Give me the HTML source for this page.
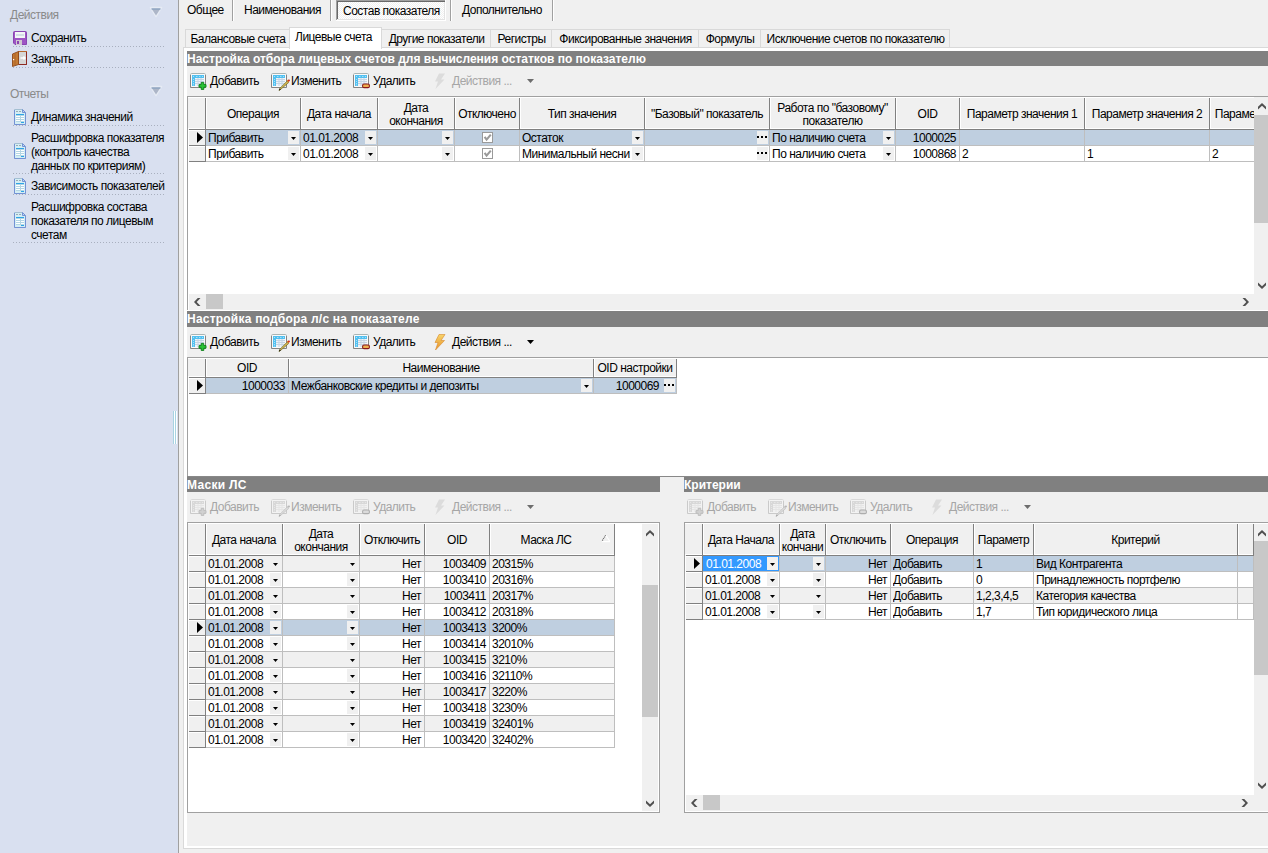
<!DOCTYPE html>
<html><head><meta charset="utf-8"><style>
html,body{margin:0;padding:0;}
body{width:1268px;height:853px;overflow:hidden;position:relative;background:#f0f0f0;font-family:'Liberation Sans', sans-serif;font-size:12px;letter-spacing:-0.5px;color:#000;}
body div, body svg{position:absolute;}
.t{white-space:nowrap;line-height:12px;}
</style></head><body>
<div style="left:0px;top:0px;width:178px;height:853px;background:#d9e0f0"></div><div style="left:178px;top:0px;width:1px;height:853px;background:#a0a0a0"></div><div class="t" style="left:10px;top:9px;color:#8a8a8a">Действия</div><svg style="left:149px;top:6px" width="14" height="12" viewBox="0 0 14 12"><path d="M1.5 1.5 L12.5 1.5 L7 10.5 Z" fill="#e6ebf4" stroke="#e6ebf4" stroke-width="1.5" stroke-linejoin="round"/><path d="M2.5 2.5 L11.5 2.5 L7 9.5 Z" fill="#adb6c8"/><path d="M2.5 3 H11.5" stroke="#7f9bbd" stroke-width="1"/></svg><svg style="left:13px;top:31px" width="14" height="14" viewBox="0 0 14 14">
<path d="M0.5 1.5 Q0.5 0.5 1.5 0.5 H12.5 Q13.5 0.5 13.5 1.5 V13.5 H2 L0.5 12 Z" fill="#9d55c4" stroke="#8a44b2"/>
<rect x="2" y="1" width="10" height="6" fill="#f2f5f6"/>
<rect x="3" y="3" width="8" height="2" fill="#d4dde6"/>
<rect x="3" y="9" width="6" height="5" fill="#cfc8cf"/>
<rect x="4" y="10" width="2" height="3" fill="#8a44b2"/>
</svg><div class="t" style="left:31px;top:32px;">Сохранить</div><div style="left:13px;top:46px;width:151px;height:1px;background:repeating-linear-gradient(90deg,#a9b0bf 0 1px,transparent 1px 3px)"></div><svg style="left:12px;top:51px" width="16" height="16" viewBox="0 0 16 16">
<rect x="6.5" y="0.5" width="8" height="13" fill="#d6d6d6" stroke="#b8682e"/>
<path d="M14.5 1 V13.5 H7" stroke="#8e2a22" fill="none"/>
<path d="M0.5 3 L6.5 0.5 V13.5 L0.5 15.5 Z" fill="#c47a32" stroke="#8e4a1c" stroke-width="0.9"/>
<path d="M3 2.5 V14" stroke="#a8602a" stroke-width="0.8"/>
<path d="M8.5 7 H13 M11.5 5.5 L13 7 L11.5 8.5" stroke="#ffffff" stroke-width="1.4" fill="none"/>
<rect x="1" y="8" width="1.2" height="1.2" fill="#ffffff"/>
</svg><div class="t" style="left:31px;top:53px;">Закрыть</div><div style="left:13px;top:67px;width:151px;height:1px;background:repeating-linear-gradient(90deg,#a9b0bf 0 1px,transparent 1px 3px)"></div><div class="t" style="left:10px;top:88px;color:#8a8a8a">Отчеты</div><svg style="left:149px;top:85px" width="14" height="12" viewBox="0 0 14 12"><path d="M1.5 1.5 L12.5 1.5 L7 10.5 Z" fill="#e6ebf4" stroke="#e6ebf4" stroke-width="1.5" stroke-linejoin="round"/><path d="M2.5 2.5 L11.5 2.5 L7 9.5 Z" fill="#adb6c8"/><path d="M2.5 3 H11.5" stroke="#7f9bbd" stroke-width="1"/></svg><svg style="left:14px;top:109px" width="12" height="16" viewBox="0 0 12 16">
<path d="M0.5 0.5 H8.5 L11.5 3.5 V15.5 H0.5 Z" fill="#d4eef4" stroke="#a4bfd2"/>
<path d="M0.5 1 V15.5 H11.5 V4" stroke="#7392d4" fill="none"/>
<path d="M8.5 0.5 V3.5 H11.5 Z" fill="#c4d8f0" stroke="#7392d4"/>
<rect x="2" y="2" width="2" height="1" fill="#9aaab4"/>
<rect x="5" y="2" width="2" height="1" fill="#9aaab4"/>
<rect x="2" y="5" width="8" height="1" fill="#2ea4e6"/>
<rect x="2" y="6" width="8" height="7" fill="#b4d6e4"/>
<rect x="2" y="7" width="4" height="1" fill="#fff"/><rect x="7" y="7" width="3" height="1" fill="#fff"/>
<rect x="2" y="9" width="4" height="1" fill="#fff"/><rect x="7" y="9" width="3" height="1" fill="#fff"/>
<rect x="2" y="11" width="4" height="1" fill="#fff"/><rect x="7" y="11" width="3" height="1" fill="#fff"/>
<rect x="7" y="13" width="3" height="1" fill="#2ea4e6"/>
</svg><div class="t" style="left:31px;top:111px;">Динамика значений</div><div style="left:13px;top:125px;width:151px;height:1px;background:repeating-linear-gradient(90deg,#a9b0bf 0 1px,transparent 1px 3px)"></div><svg style="left:14px;top:143px" width="12" height="16" viewBox="0 0 12 16">
<path d="M0.5 0.5 H8.5 L11.5 3.5 V15.5 H0.5 Z" fill="#d4eef4" stroke="#a4bfd2"/>
<path d="M0.5 1 V15.5 H11.5 V4" stroke="#7392d4" fill="none"/>
<path d="M8.5 0.5 V3.5 H11.5 Z" fill="#c4d8f0" stroke="#7392d4"/>
<rect x="2" y="2" width="2" height="1" fill="#9aaab4"/>
<rect x="5" y="2" width="2" height="1" fill="#9aaab4"/>
<rect x="2" y="5" width="8" height="1" fill="#2ea4e6"/>
<rect x="2" y="6" width="8" height="7" fill="#b4d6e4"/>
<rect x="2" y="7" width="4" height="1" fill="#fff"/><rect x="7" y="7" width="3" height="1" fill="#fff"/>
<rect x="2" y="9" width="4" height="1" fill="#fff"/><rect x="7" y="9" width="3" height="1" fill="#fff"/>
<rect x="2" y="11" width="4" height="1" fill="#fff"/><rect x="7" y="11" width="3" height="1" fill="#fff"/>
<rect x="7" y="13" width="3" height="1" fill="#2ea4e6"/>
</svg><div class="t" style="left:31px;top:131px;line-height:14px">Расшифровка показателя<br>(контроль качества<br>данных по критериям)</div><div style="left:13px;top:173px;width:151px;height:1px;background:repeating-linear-gradient(90deg,#a9b0bf 0 1px,transparent 1px 3px)"></div><svg style="left:14px;top:178px" width="12" height="16" viewBox="0 0 12 16">
<path d="M0.5 0.5 H8.5 L11.5 3.5 V15.5 H0.5 Z" fill="#d4eef4" stroke="#a4bfd2"/>
<path d="M0.5 1 V15.5 H11.5 V4" stroke="#7392d4" fill="none"/>
<path d="M8.5 0.5 V3.5 H11.5 Z" fill="#c4d8f0" stroke="#7392d4"/>
<rect x="2" y="2" width="2" height="1" fill="#9aaab4"/>
<rect x="5" y="2" width="2" height="1" fill="#9aaab4"/>
<rect x="2" y="5" width="8" height="1" fill="#2ea4e6"/>
<rect x="2" y="6" width="8" height="7" fill="#b4d6e4"/>
<rect x="2" y="7" width="4" height="1" fill="#fff"/><rect x="7" y="7" width="3" height="1" fill="#fff"/>
<rect x="2" y="9" width="4" height="1" fill="#fff"/><rect x="7" y="9" width="3" height="1" fill="#fff"/>
<rect x="2" y="11" width="4" height="1" fill="#fff"/><rect x="7" y="11" width="3" height="1" fill="#fff"/>
<rect x="7" y="13" width="3" height="1" fill="#2ea4e6"/>
</svg><div class="t" style="left:31px;top:180px;">Зависимость показателей</div><div style="left:13px;top:194px;width:151px;height:1px;background:repeating-linear-gradient(90deg,#a9b0bf 0 1px,transparent 1px 3px)"></div><svg style="left:14px;top:212px" width="12" height="16" viewBox="0 0 12 16">
<path d="M0.5 0.5 H8.5 L11.5 3.5 V15.5 H0.5 Z" fill="#d4eef4" stroke="#a4bfd2"/>
<path d="M0.5 1 V15.5 H11.5 V4" stroke="#7392d4" fill="none"/>
<path d="M8.5 0.5 V3.5 H11.5 Z" fill="#c4d8f0" stroke="#7392d4"/>
<rect x="2" y="2" width="2" height="1" fill="#9aaab4"/>
<rect x="5" y="2" width="2" height="1" fill="#9aaab4"/>
<rect x="2" y="5" width="8" height="1" fill="#2ea4e6"/>
<rect x="2" y="6" width="8" height="7" fill="#b4d6e4"/>
<rect x="2" y="7" width="4" height="1" fill="#fff"/><rect x="7" y="7" width="3" height="1" fill="#fff"/>
<rect x="2" y="9" width="4" height="1" fill="#fff"/><rect x="7" y="9" width="3" height="1" fill="#fff"/>
<rect x="2" y="11" width="4" height="1" fill="#fff"/><rect x="7" y="11" width="3" height="1" fill="#fff"/>
<rect x="7" y="13" width="3" height="1" fill="#2ea4e6"/>
</svg><div class="t" style="left:31px;top:200px;line-height:14px">Расшифровка состава<br>показателя по лицевым<br>счетам</div><div style="left:13px;top:242px;width:151px;height:1px;background:repeating-linear-gradient(90deg,#a9b0bf 0 1px,transparent 1px 3px)"></div><div style="left:173px;top:411px;width:1px;height:33px;background:#a8d3e2"></div><div style="left:174px;top:411px;width:1px;height:33px;background:#ffffff"></div><div style="left:175px;top:411px;width:1px;height:33px;background:#a8d3e2"></div><div style="left:176px;top:411px;width:1px;height:33px;background:#ffffff"></div><div class="t" style="left:187px;top:4px;">Общее</div><div class="t" style="left:244px;top:4px;">Наименования</div><div class="t" style="left:462px;top:4px;">Дополнительно</div><div style="left:232px;top:0px;width:1px;height:21px;background:#a0a0a0"></div><div style="left:233px;top:0px;width:1px;height:21px;background:#ffffff"></div><div style="left:330px;top:0px;width:1px;height:21px;background:#a0a0a0"></div><div style="left:331px;top:0px;width:1px;height:21px;background:#ffffff"></div><div style="left:450px;top:0px;width:1px;height:21px;background:#a0a0a0"></div><div style="left:451px;top:0px;width:1px;height:21px;background:#ffffff"></div><div style="left:552px;top:0px;width:1px;height:21px;background:#a0a0a0"></div><div style="left:553px;top:0px;width:1px;height:21px;background:#ffffff"></div><div style="left:336px;top:0px;width:110px;height:21px;background:repeating-conic-gradient(#ffffff 0 25%, #f0f0f0 0 50%) 0 0/2px 2px"></div><div style="left:336px;top:0px;width:110px;height:1px;background:#a0a0a0"></div><div style="left:337px;top:1px;width:108px;height:1px;background:#696969"></div><div style="left:336px;top:0px;width:1px;height:20px;background:#a0a0a0"></div><div style="left:337px;top:1px;width:1px;height:18px;background:#696969"></div><div style="left:338px;top:19px;width:107px;height:1px;background:#e3e3e3"></div><div style="left:336px;top:20px;width:110px;height:1px;background:#ffffff"></div><div style="left:444px;top:2px;width:1px;height:18px;background:#e3e3e3"></div><div style="left:445px;top:0px;width:1px;height:21px;background:#ffffff"></div><div class="t" style="left:343px;top:5px;">Состав показателя</div><div style="left:183px;top:47px;width:1085px;height:1px;background:#d9d9d9"></div><div style="left:183px;top:47px;width:1px;height:802px;background:#d9d9d9"></div><div style="left:183px;top:848px;width:1085px;height:1px;background:#d9d9d9"></div><div style="left:184px;top:48px;width:1084px;height:3px;background:#fff"></div><div style="left:184px;top:48px;width:3px;height:800px;background:#fff"></div><div style="left:184px;top:846px;width:1084px;height:2px;background:#fff"></div><div style="left:185px;top:29px;width:105px;height:18px;background:#f0f0f0;border-top:1px solid #d9d9d9;border-left:1px solid #d9d9d9;border-right:1px solid #d9d9d9;box-sizing:border-box"></div><div class="t" style="left:186px;top:33px;width:104px;text-align:center">Балансовые счета</div><div style="left:381px;top:29px;width:110px;height:18px;background:#f0f0f0;border-top:1px solid #d9d9d9;border-left:1px solid #d9d9d9;border-right:1px solid #d9d9d9;box-sizing:border-box"></div><div class="t" style="left:382px;top:33px;width:109px;text-align:center">Другие показатели</div><div style="left:490px;top:29px;width:62px;height:18px;background:#f0f0f0;border-top:1px solid #d9d9d9;border-left:1px solid #d9d9d9;border-right:1px solid #d9d9d9;box-sizing:border-box"></div><div class="t" style="left:491px;top:33px;width:61px;text-align:center">Регистры</div><div style="left:551px;top:29px;width:148px;height:18px;background:#f0f0f0;border-top:1px solid #d9d9d9;border-left:1px solid #d9d9d9;border-right:1px solid #d9d9d9;box-sizing:border-box"></div><div class="t" style="left:552px;top:33px;width:147px;text-align:center">Фиксированные значения</div><div style="left:698px;top:29px;width:63px;height:18px;background:#f0f0f0;border-top:1px solid #d9d9d9;border-left:1px solid #d9d9d9;border-right:1px solid #d9d9d9;box-sizing:border-box"></div><div class="t" style="left:699px;top:33px;width:62px;text-align:center">Формулы</div><div style="left:760px;top:29px;width:190px;height:18px;background:#f0f0f0;border-top:1px solid #d9d9d9;border-left:1px solid #d9d9d9;border-right:1px solid #d9d9d9;box-sizing:border-box"></div><div class="t" style="left:761px;top:33px;width:189px;text-align:center">Исключение счетов по показателю</div><div style="left:289px;top:27px;width:93px;height:22px;background:#fff;border-top:1px solid #d9d9d9;border-left:1px solid #d9d9d9;border-right:1px solid #d9d9d9;box-sizing:border-box"></div><div class="t" style="left:295px;top:31px;">Лицевые счета</div><div style="left:187px;top:51px;width:1081px;height:15px;background:#808080"></div><div class="t" style="left:187px;top:52px;line-height:15px;font-weight:bold;font-size:12px;letter-spacing:0px;color:#fff">Настройка отбора лицевых счетов для вычисления остатков по показателю</div><svg style="left:190px;top:73px;" width="19" height="19" viewBox="0 0 19 19">
<rect x="0.5" y="0.5" width="15" height="14" rx="1.2" fill="#fafafa" stroke="#a8b4b4"/>
<path d="M0.5 2 V14.5 H15.5 V2" stroke="#858585" fill="none"/>
<rect x="2" y="2" width="12" height="11" fill="#52c0f0"/>
<rect x="5" y="5" width="9" height="8" fill="#eef4f8"/>
<path d="M5 6.5 H14 M5 8.5 H14 M5 10.5 H14 M8 5 V13 M11 5 V13" stroke="#c4d4e4" stroke-width="1"/>
<path d="M3 3.5 H4 M6 3.5 H7.5 M9 3.5 H10.5 M12 3.5 H13 M3 6.5 H4 M3 8.5 H4 M3 10.5 H4 M3 12 H4" stroke="#a8e0f8" stroke-width="1"/>
<path d="M11.2 9.4 H13.8 V11.6 H16 V14.2 H13.8 V16.4 H11.2 V14.2 H9 V11.6 H11.2 Z" fill="#2ac436" stroke="#0b7a16" stroke-width="0.9"/>
</svg><div class="t" style="left:210px;top:75px;">Добавить</div><svg style="left:271px;top:73px;" width="19" height="19" viewBox="0 0 19 19">
<rect x="0.5" y="0.5" width="15" height="14" rx="1.2" fill="#fafafa" stroke="#a8b4b4"/>
<path d="M0.5 2 V14.5 H15.5 V2" stroke="#858585" fill="none"/>
<rect x="2" y="2" width="12" height="11" fill="#52c0f0"/>
<rect x="5" y="5" width="9" height="8" fill="#eef4f8"/>
<path d="M5 6.5 H14 M5 8.5 H14 M5 10.5 H14 M8 5 V13 M11 5 V13" stroke="#c4d4e4" stroke-width="1"/>
<path d="M3 3.5 H4 M6 3.5 H7.5 M9 3.5 H10.5 M12 3.5 H13 M3 6.5 H4 M3 8.5 H4 M3 10.5 H4 M3 12 H4" stroke="#a8e0f8" stroke-width="1"/>
<path d="M9.6 16.4 L8 17.6 L8.8 15.4 L16 8.2 L17.6 9.6 Z" fill="#d8b850" stroke="#6a6a2a" stroke-width="0.7"/><path d="M8 17.6 L8.8 15.4 L9.8 16.6 Z" fill="#000"/><path d="M15.6 7.6 L17.2 6.4 L18.4 7.6 L17.6 9.4 Z" fill="#e08020"/><circle cx="18" cy="7.4" r="0.9" fill="#d02020"/>
</svg><div class="t" style="left:291px;top:75px;">Изменить</div><svg style="left:353px;top:73px;" width="19" height="19" viewBox="0 0 19 19">
<rect x="0.5" y="0.5" width="15" height="14" rx="1.2" fill="#fafafa" stroke="#a8b4b4"/>
<path d="M0.5 2 V14.5 H15.5 V2" stroke="#858585" fill="none"/>
<rect x="2" y="2" width="12" height="11" fill="#52c0f0"/>
<rect x="5" y="5" width="9" height="8" fill="#eef4f8"/>
<path d="M5 6.5 H14 M5 8.5 H14 M5 10.5 H14 M8 5 V13 M11 5 V13" stroke="#c4d4e4" stroke-width="1"/>
<path d="M3 3.5 H4 M6 3.5 H7.5 M9 3.5 H10.5 M12 3.5 H13 M3 6.5 H4 M3 8.5 H4 M3 10.5 H4 M3 12 H4" stroke="#a8e0f8" stroke-width="1"/>
<rect x="9.6" y="11" width="6.8" height="3.6" rx="1.4" fill="#eeb050" stroke="#8b1a1a" stroke-width="1.1"/>
</svg><div class="t" style="left:373px;top:75px;">Удалить</div><svg style="left:434px;top:73px" width="12" height="17" viewBox="0 0 12 17"><path d="M5 0.5 H11 L7 6.5 H10.5 L1.5 16 L4 8.5 H1 Z" fill="#dcdcdc"/></svg><div class="t" style="left:452px;top:75px;color:#a6a6a6;">Действия ...</div><svg style="left:527px;top:79px" width="7" height="4" viewBox="0 0 7 4"><path d="M0 0 H7 L3.5 4 Z" fill="#6d6d6d"/></svg><div style="left:187px;top:96px;width:1081px;height:215px;background:#fff;border-left:1px solid #a0a0a0;border-top:1px solid #a0a0a0;box-sizing:border-box"></div><div style="left:188px;top:97px;width:1080px;height:33px;background:#f0f0f0"></div><div style="left:188px;top:97px;width:1080px;height:1px;background:#ffffff"></div><div style="left:188px;top:128px;width:1080px;height:1px;background:#ffffff"></div><div style="left:189px;top:129px;width:1142px;height:1px;background:#808080"></div><div style="left:205px;top:98px;width:1px;height:31px;background:#808080"></div><div style="left:206px;top:98px;width:1px;height:30px;background:#ffffff"></div><div style="left:300px;top:98px;width:1px;height:31px;background:#808080"></div><div style="left:301px;top:98px;width:1px;height:30px;background:#ffffff"></div><div class="t" style="left:206px;top:108px;width:94px;text-align:center;line-height:13px;overflow:hidden">Операция</div><div style="left:377px;top:98px;width:1px;height:31px;background:#808080"></div><div style="left:378px;top:98px;width:1px;height:30px;background:#ffffff"></div><div class="t" style="left:301px;top:108px;width:76px;text-align:center;line-height:13px;overflow:hidden">Дата начала</div><div style="left:454px;top:98px;width:1px;height:31px;background:#808080"></div><div style="left:455px;top:98px;width:1px;height:30px;background:#ffffff"></div><div class="t" style="left:378px;top:102px;width:76px;text-align:center;line-height:13px;overflow:hidden">Дата<br>окончания</div><div style="left:519px;top:98px;width:1px;height:31px;background:#808080"></div><div style="left:520px;top:98px;width:1px;height:30px;background:#ffffff"></div><div class="t" style="left:455px;top:108px;width:64px;text-align:center;line-height:13px;overflow:hidden">Отключено</div><div style="left:644px;top:98px;width:1px;height:31px;background:#808080"></div><div style="left:645px;top:98px;width:1px;height:30px;background:#ffffff"></div><div class="t" style="left:520px;top:108px;width:124px;text-align:center;line-height:13px;overflow:hidden">Тип значения</div><div style="left:769px;top:98px;width:1px;height:31px;background:#808080"></div><div style="left:770px;top:98px;width:1px;height:30px;background:#ffffff"></div><div class="t" style="left:645px;top:108px;width:124px;text-align:center;line-height:13px;overflow:hidden">"Базовый" показатель</div><div style="left:895px;top:98px;width:1px;height:31px;background:#808080"></div><div style="left:896px;top:98px;width:1px;height:30px;background:#ffffff"></div><div class="t" style="left:770px;top:102px;width:125px;text-align:center;line-height:13px;overflow:hidden">Работа по "базовому"<br>показателю</div><div style="left:959px;top:98px;width:1px;height:31px;background:#808080"></div><div style="left:960px;top:98px;width:1px;height:30px;background:#ffffff"></div><div class="t" style="left:896px;top:108px;width:63px;text-align:center;line-height:13px;overflow:hidden">OID</div><div style="left:1084px;top:98px;width:1px;height:31px;background:#808080"></div><div style="left:1085px;top:98px;width:1px;height:30px;background:#ffffff"></div><div class="t" style="left:960px;top:108px;width:124px;text-align:center;line-height:13px;overflow:hidden">Параметр значения 1</div><div style="left:1209px;top:98px;width:1px;height:31px;background:#808080"></div><div style="left:1210px;top:98px;width:1px;height:30px;background:#ffffff"></div><div class="t" style="left:1085px;top:108px;width:124px;text-align:center;line-height:13px;overflow:hidden">Параметр значения 2</div><div style="left:1330px;top:98px;width:1px;height:31px;background:#808080"></div><div style="left:1331px;top:98px;width:1px;height:30px;background:#ffffff"></div><div class="t" style="left:1210px;top:108px;width:120px;text-align:center;line-height:13px;overflow:hidden">Параметр значения 3</div><div style="left:206px;top:130px;width:1125px;height:15px;background:#bfcfe0"></div><div style="left:188px;top:130px;width:17px;height:15px;background:#ffffff"></div><div style="left:189px;top:131px;width:16px;height:14px;background:#f0f0f0"></div><div style="left:189px;top:145px;width:17px;height:1px;background:#808080"></div><div style="left:206px;top:145px;width:1125px;height:1px;background:#bebebe"></div><div style="left:205px;top:130px;width:1px;height:16px;background:#808080"></div><div style="left:300px;top:130px;width:1px;height:16px;background:#bebebe"></div><div style="left:377px;top:130px;width:1px;height:16px;background:#bebebe"></div><div style="left:454px;top:130px;width:1px;height:16px;background:#bebebe"></div><div style="left:519px;top:130px;width:1px;height:16px;background:#bebebe"></div><div style="left:644px;top:130px;width:1px;height:16px;background:#bebebe"></div><div style="left:769px;top:130px;width:1px;height:16px;background:#bebebe"></div><div style="left:895px;top:130px;width:1px;height:16px;background:#bebebe"></div><div style="left:959px;top:130px;width:1px;height:16px;background:#bebebe"></div><div style="left:1084px;top:130px;width:1px;height:16px;background:#bebebe"></div><div style="left:1209px;top:130px;width:1px;height:16px;background:#bebebe"></div><div style="left:1330px;top:130px;width:1px;height:16px;background:#bebebe"></div><svg style="left:197px;top:132px" width="6" height="11" viewBox="0 0 6 11"><path d="M0 0 L6 5.5 L0 11 Z" fill="#000"/></svg><div class="t" style="left:208px;top:132px;width:78px;overflow:hidden">Прибавить</div><div style="left:288px;top:131px;width:11px;height:13px;background:#f0f0f0"></div><svg style="left:291px;top:137px" width="5" height="3" viewBox="0 0 5 3"><path d="M0 0 H5 L2.5 3 Z" fill="#000"/></svg><div class="t" style="left:303px;top:132px;width:60px;overflow:hidden">01.01.2008</div><div style="left:365px;top:131px;width:11px;height:13px;background:#f0f0f0"></div><svg style="left:368px;top:137px" width="5" height="3" viewBox="0 0 5 3"><path d="M0 0 H5 L2.5 3 Z" fill="#000"/></svg><div style="left:442px;top:131px;width:11px;height:13px;background:#f0f0f0"></div><svg style="left:445px;top:137px" width="5" height="3" viewBox="0 0 5 3"><path d="M0 0 H5 L2.5 3 Z" fill="#000"/></svg><svg style="left:482px;top:132px" width="11" height="11" viewBox="0 0 11 11"><rect x="0.5" y="0.5" width="10" height="10" fill="#fff" stroke="#9a9a9a"/><path d="M2.6 4.8 L4.6 7.6 L8.8 2.6" stroke="#9a9a9a" stroke-width="2.1" fill="none"/></svg><div class="t" style="left:522px;top:132px;width:108px;overflow:hidden">Остаток</div><div style="left:632px;top:131px;width:11px;height:13px;background:#f0f0f0"></div><svg style="left:635px;top:137px" width="5" height="3" viewBox="0 0 5 3"><path d="M0 0 H5 L2.5 3 Z" fill="#000"/></svg><div style="left:757px;top:131px;width:11px;height:13px;background:#f0f0f0"></div><div style="left:757px;top:136px;width:2px;height:2px;background:#000"></div><div style="left:761px;top:136px;width:2px;height:2px;background:#000"></div><div style="left:765px;top:136px;width:2px;height:2px;background:#000"></div><div class="t" style="left:772px;top:132px;width:109px;overflow:hidden">По наличию счета</div><div style="left:883px;top:131px;width:11px;height:13px;background:#f0f0f0"></div><svg style="left:886px;top:137px" width="5" height="3" viewBox="0 0 5 3"><path d="M0 0 H5 L2.5 3 Z" fill="#000"/></svg><div class="t" style="left:896px;top:132px;width:60px;text-align:right">1000025</div><div style="left:206px;top:146px;width:1125px;height:15px;background:#fff"></div><div style="left:188px;top:146px;width:17px;height:15px;background:#ffffff"></div><div style="left:189px;top:147px;width:16px;height:14px;background:#f0f0f0"></div><div style="left:189px;top:161px;width:17px;height:1px;background:#808080"></div><div style="left:206px;top:161px;width:1125px;height:1px;background:#bebebe"></div><div style="left:205px;top:146px;width:1px;height:16px;background:#808080"></div><div style="left:300px;top:146px;width:1px;height:16px;background:#bebebe"></div><div style="left:377px;top:146px;width:1px;height:16px;background:#bebebe"></div><div style="left:454px;top:146px;width:1px;height:16px;background:#bebebe"></div><div style="left:519px;top:146px;width:1px;height:16px;background:#bebebe"></div><div style="left:644px;top:146px;width:1px;height:16px;background:#bebebe"></div><div style="left:769px;top:146px;width:1px;height:16px;background:#bebebe"></div><div style="left:895px;top:146px;width:1px;height:16px;background:#bebebe"></div><div style="left:959px;top:146px;width:1px;height:16px;background:#bebebe"></div><div style="left:1084px;top:146px;width:1px;height:16px;background:#bebebe"></div><div style="left:1209px;top:146px;width:1px;height:16px;background:#bebebe"></div><div style="left:1330px;top:146px;width:1px;height:16px;background:#bebebe"></div><div class="t" style="left:208px;top:148px;width:78px;overflow:hidden">Прибавить</div><div style="left:288px;top:147px;width:11px;height:13px;background:#f0f0f0"></div><svg style="left:291px;top:153px" width="5" height="3" viewBox="0 0 5 3"><path d="M0 0 H5 L2.5 3 Z" fill="#000"/></svg><div class="t" style="left:303px;top:148px;width:60px;overflow:hidden">01.01.2008</div><div style="left:365px;top:147px;width:11px;height:13px;background:#f0f0f0"></div><svg style="left:368px;top:153px" width="5" height="3" viewBox="0 0 5 3"><path d="M0 0 H5 L2.5 3 Z" fill="#000"/></svg><div style="left:442px;top:147px;width:11px;height:13px;background:#f0f0f0"></div><svg style="left:445px;top:153px" width="5" height="3" viewBox="0 0 5 3"><path d="M0 0 H5 L2.5 3 Z" fill="#000"/></svg><svg style="left:482px;top:148px" width="11" height="11" viewBox="0 0 11 11"><rect x="0.5" y="0.5" width="10" height="10" fill="#fff" stroke="#9a9a9a"/><path d="M2.6 4.8 L4.6 7.6 L8.8 2.6" stroke="#9a9a9a" stroke-width="2.1" fill="none"/></svg><div class="t" style="left:522px;top:148px;width:108px;overflow:hidden">Минимальный неснижаемый</div><div style="left:632px;top:147px;width:11px;height:13px;background:#f0f0f0"></div><svg style="left:635px;top:153px" width="5" height="3" viewBox="0 0 5 3"><path d="M0 0 H5 L2.5 3 Z" fill="#000"/></svg><div style="left:757px;top:147px;width:11px;height:13px;background:#f0f0f0"></div><div style="left:757px;top:152px;width:2px;height:2px;background:#000"></div><div style="left:761px;top:152px;width:2px;height:2px;background:#000"></div><div style="left:765px;top:152px;width:2px;height:2px;background:#000"></div><div class="t" style="left:772px;top:148px;width:109px;overflow:hidden">По наличию счета</div><div style="left:883px;top:147px;width:11px;height:13px;background:#f0f0f0"></div><svg style="left:886px;top:153px" width="5" height="3" viewBox="0 0 5 3"><path d="M0 0 H5 L2.5 3 Z" fill="#000"/></svg><div class="t" style="left:896px;top:148px;width:60px;text-align:right">1000868</div><div class="t" style="left:962px;top:148px;width:121px;overflow:hidden">2</div><div class="t" style="left:1087px;top:148px;width:121px;overflow:hidden">1</div><div class="t" style="left:1212px;top:148px;width:117px;overflow:hidden">2</div><div style="left:1254px;top:97px;width:14px;height:197px;background:#f0f0f0"></div><div style="left:1254px;top:115px;width:14px;height:108px;background:#c8c8c8"></div><svg style="left:1258px;top:103px" width="8" height="7" viewBox="0 0 8 7"><path d="M0 3.8 L4 0 L8 3.8 L8 6.5 L4 2.7 L0 6.5 Z" fill="#505050"/></svg><svg style="left:1258px;top:282px" width="8" height="7" viewBox="0 0 8 7"><path d="M0 0.5 L4 4.3 L8 0.5 L8 3.2 L4 7 L0 3.2 Z" fill="#505050"/></svg><div style="left:189px;top:294px;width:1065px;height:16px;background:#f0f0f0"></div><div style="left:206px;top:294px;width:17px;height:15px;background:#c8c8c8"></div><svg style="left:194px;top:298px" width="7" height="8" viewBox="0 0 7 8"><path d="M3.8 0 L0 4 L3.8 8 L6.5 8 L2.7 4 L6.5 0 Z" fill="#505050"/></svg><svg style="left:1242px;top:298px" width="7" height="8" viewBox="0 0 7 8"><path d="M0.5 0 L4.3 4 L0.5 8 L3.2 8 L7 4 L3.2 0 Z" fill="#505050"/></svg><div style="left:1254px;top:294px;width:14px;height:16px;background:#f0f0f0"></div><div style="left:187px;top:310px;width:1081px;height:1px;background:#ffffff"></div><div style="left:187px;top:311px;width:1081px;height:16px;background:#808080"></div><div class="t" style="left:187px;top:312px;line-height:15px;font-weight:bold;font-size:12px;letter-spacing:0.22px;color:#fff">Настройка подбора л/с на показателе</div><svg style="left:190px;top:334px;" width="19" height="19" viewBox="0 0 19 19">
<rect x="0.5" y="0.5" width="15" height="14" rx="1.2" fill="#fafafa" stroke="#a8b4b4"/>
<path d="M0.5 2 V14.5 H15.5 V2" stroke="#858585" fill="none"/>
<rect x="2" y="2" width="12" height="11" fill="#52c0f0"/>
<rect x="5" y="5" width="9" height="8" fill="#eef4f8"/>
<path d="M5 6.5 H14 M5 8.5 H14 M5 10.5 H14 M8 5 V13 M11 5 V13" stroke="#c4d4e4" stroke-width="1"/>
<path d="M3 3.5 H4 M6 3.5 H7.5 M9 3.5 H10.5 M12 3.5 H13 M3 6.5 H4 M3 8.5 H4 M3 10.5 H4 M3 12 H4" stroke="#a8e0f8" stroke-width="1"/>
<path d="M11.2 9.4 H13.8 V11.6 H16 V14.2 H13.8 V16.4 H11.2 V14.2 H9 V11.6 H11.2 Z" fill="#2ac436" stroke="#0b7a16" stroke-width="0.9"/>
</svg><div class="t" style="left:210px;top:336px;">Добавить</div><svg style="left:271px;top:334px;" width="19" height="19" viewBox="0 0 19 19">
<rect x="0.5" y="0.5" width="15" height="14" rx="1.2" fill="#fafafa" stroke="#a8b4b4"/>
<path d="M0.5 2 V14.5 H15.5 V2" stroke="#858585" fill="none"/>
<rect x="2" y="2" width="12" height="11" fill="#52c0f0"/>
<rect x="5" y="5" width="9" height="8" fill="#eef4f8"/>
<path d="M5 6.5 H14 M5 8.5 H14 M5 10.5 H14 M8 5 V13 M11 5 V13" stroke="#c4d4e4" stroke-width="1"/>
<path d="M3 3.5 H4 M6 3.5 H7.5 M9 3.5 H10.5 M12 3.5 H13 M3 6.5 H4 M3 8.5 H4 M3 10.5 H4 M3 12 H4" stroke="#a8e0f8" stroke-width="1"/>
<path d="M9.6 16.4 L8 17.6 L8.8 15.4 L16 8.2 L17.6 9.6 Z" fill="#d8b850" stroke="#6a6a2a" stroke-width="0.7"/><path d="M8 17.6 L8.8 15.4 L9.8 16.6 Z" fill="#000"/><path d="M15.6 7.6 L17.2 6.4 L18.4 7.6 L17.6 9.4 Z" fill="#e08020"/><circle cx="18" cy="7.4" r="0.9" fill="#d02020"/>
</svg><div class="t" style="left:291px;top:336px;">Изменить</div><svg style="left:353px;top:334px;" width="19" height="19" viewBox="0 0 19 19">
<rect x="0.5" y="0.5" width="15" height="14" rx="1.2" fill="#fafafa" stroke="#a8b4b4"/>
<path d="M0.5 2 V14.5 H15.5 V2" stroke="#858585" fill="none"/>
<rect x="2" y="2" width="12" height="11" fill="#52c0f0"/>
<rect x="5" y="5" width="9" height="8" fill="#eef4f8"/>
<path d="M5 6.5 H14 M5 8.5 H14 M5 10.5 H14 M8 5 V13 M11 5 V13" stroke="#c4d4e4" stroke-width="1"/>
<path d="M3 3.5 H4 M6 3.5 H7.5 M9 3.5 H10.5 M12 3.5 H13 M3 6.5 H4 M3 8.5 H4 M3 10.5 H4 M3 12 H4" stroke="#a8e0f8" stroke-width="1"/>
<rect x="9.6" y="11" width="6.8" height="3.6" rx="1.4" fill="#eeb050" stroke="#8b1a1a" stroke-width="1.1"/>
</svg><div class="t" style="left:373px;top:336px;">Удалить</div><svg style="left:434px;top:334px" width="12" height="17" viewBox="0 0 12 17"><defs><linearGradient id="bg434334" x1="0" y1="0" x2="0" y2="1"><stop offset="0" stop-color="#f7d46a"/><stop offset="1" stop-color="#e8912a"/></linearGradient></defs><path d="M5 0.5 H11 L7 6.5 H10.5 L1.5 16 L4 8.5 H1 Z" fill="url(#bg434334)" stroke="#d98a2a" stroke-width="0.6"/></svg><div class="t" style="left:452px;top:336px;">Действия ...</div><svg style="left:527px;top:340px" width="7" height="4" viewBox="0 0 7 4"><path d="M0 0 H7 L3.5 4 Z" fill="#000"/></svg><div style="left:187px;top:357px;width:1081px;height:120px;background:#fff;border-left:1px solid #a0a0a0;border-top:1px solid #a0a0a0;box-sizing:border-box"></div><div style="left:188px;top:358px;width:489px;height:20px;background:#f0f0f0"></div><div style="left:188px;top:358px;width:489px;height:1px;background:#ffffff"></div><div style="left:188px;top:376px;width:489px;height:1px;background:#ffffff"></div><div style="left:189px;top:377px;width:488px;height:1px;background:#808080"></div><div style="left:205px;top:359px;width:1px;height:18px;background:#808080"></div><div style="left:206px;top:359px;width:1px;height:17px;background:#ffffff"></div><div style="left:288px;top:359px;width:1px;height:18px;background:#808080"></div><div style="left:289px;top:359px;width:1px;height:17px;background:#ffffff"></div><div class="t" style="left:206px;top:362px;width:82px;text-align:center;line-height:13px;overflow:hidden">OID</div><div style="left:593px;top:359px;width:1px;height:18px;background:#808080"></div><div style="left:594px;top:359px;width:1px;height:17px;background:#ffffff"></div><div class="t" style="left:289px;top:362px;width:304px;text-align:center;line-height:13px;overflow:hidden">Наименование</div><div style="left:676px;top:359px;width:1px;height:18px;background:#808080"></div><div style="left:677px;top:359px;width:1px;height:17px;background:#ffffff"></div><div class="t" style="left:594px;top:362px;width:82px;text-align:center;line-height:13px;overflow:hidden">OID настройки</div><div style="left:206px;top:378px;width:471px;height:15px;background:#bfcfe0"></div><div style="left:188px;top:378px;width:17px;height:15px;background:#ffffff"></div><div style="left:189px;top:379px;width:16px;height:14px;background:#f0f0f0"></div><div style="left:189px;top:393px;width:17px;height:1px;background:#808080"></div><div style="left:206px;top:393px;width:471px;height:1px;background:#bebebe"></div><div style="left:205px;top:378px;width:1px;height:16px;background:#808080"></div><div style="left:288px;top:378px;width:1px;height:16px;background:#bebebe"></div><div style="left:593px;top:378px;width:1px;height:16px;background:#bebebe"></div><div style="left:676px;top:378px;width:1px;height:16px;background:#bebebe"></div><svg style="left:197px;top:380px" width="6" height="11" viewBox="0 0 6 11"><path d="M0 0 L6 5.5 L0 11 Z" fill="#000"/></svg><div class="t" style="left:206px;top:380px;width:79px;text-align:right">1000033</div><div class="t" style="left:291px;top:380px;width:288px;overflow:hidden">Межбанковские кредиты и депозиты</div><div style="left:581px;top:379px;width:11px;height:13px;background:#f0f0f0"></div><svg style="left:584px;top:385px" width="5" height="3" viewBox="0 0 5 3"><path d="M0 0 H5 L2.5 3 Z" fill="#000"/></svg><div class="t" style="left:594px;top:380px;width:65px;text-align:right">1000069</div><div style="left:664px;top:379px;width:11px;height:13px;background:#f0f0f0"></div><div style="left:664px;top:384px;width:2px;height:2px;background:#000"></div><div style="left:668px;top:384px;width:2px;height:2px;background:#000"></div><div style="left:672px;top:384px;width:2px;height:2px;background:#000"></div><div style="left:187px;top:476px;width:1081px;height:1px;background:#888888"></div><div style="left:187px;top:477px;width:473px;height:15px;background:#808080"></div><div class="t" style="left:187px;top:478px;line-height:15px;font-weight:bold;font-size:12px;letter-spacing:0.3px;color:#fff">Маски ЛС</div><svg style="left:190px;top:499px;opacity:0.35;filter:grayscale(1);" width="19" height="19" viewBox="0 0 19 19">
<rect x="0.5" y="0.5" width="15" height="14" rx="1.2" fill="#fafafa" stroke="#a8b4b4"/>
<path d="M0.5 2 V14.5 H15.5 V2" stroke="#858585" fill="none"/>
<rect x="2" y="2" width="12" height="11" fill="#52c0f0"/>
<rect x="5" y="5" width="9" height="8" fill="#eef4f8"/>
<path d="M5 6.5 H14 M5 8.5 H14 M5 10.5 H14 M8 5 V13 M11 5 V13" stroke="#c4d4e4" stroke-width="1"/>
<path d="M3 3.5 H4 M6 3.5 H7.5 M9 3.5 H10.5 M12 3.5 H13 M3 6.5 H4 M3 8.5 H4 M3 10.5 H4 M3 12 H4" stroke="#a8e0f8" stroke-width="1"/>
<path d="M11.2 9.4 H13.8 V11.6 H16 V14.2 H13.8 V16.4 H11.2 V14.2 H9 V11.6 H11.2 Z" fill="#2ac436" stroke="#0b7a16" stroke-width="0.9"/>
</svg><div class="t" style="left:210px;top:501px;color:#a6a6a6;">Добавить</div><svg style="left:271px;top:499px;opacity:0.35;filter:grayscale(1);" width="19" height="19" viewBox="0 0 19 19">
<rect x="0.5" y="0.5" width="15" height="14" rx="1.2" fill="#fafafa" stroke="#a8b4b4"/>
<path d="M0.5 2 V14.5 H15.5 V2" stroke="#858585" fill="none"/>
<rect x="2" y="2" width="12" height="11" fill="#52c0f0"/>
<rect x="5" y="5" width="9" height="8" fill="#eef4f8"/>
<path d="M5 6.5 H14 M5 8.5 H14 M5 10.5 H14 M8 5 V13 M11 5 V13" stroke="#c4d4e4" stroke-width="1"/>
<path d="M3 3.5 H4 M6 3.5 H7.5 M9 3.5 H10.5 M12 3.5 H13 M3 6.5 H4 M3 8.5 H4 M3 10.5 H4 M3 12 H4" stroke="#a8e0f8" stroke-width="1"/>
<path d="M9.6 16.4 L8 17.6 L8.8 15.4 L16 8.2 L17.6 9.6 Z" fill="#d8b850" stroke="#6a6a2a" stroke-width="0.7"/><path d="M8 17.6 L8.8 15.4 L9.8 16.6 Z" fill="#000"/><path d="M15.6 7.6 L17.2 6.4 L18.4 7.6 L17.6 9.4 Z" fill="#e08020"/><circle cx="18" cy="7.4" r="0.9" fill="#d02020"/>
</svg><div class="t" style="left:291px;top:501px;color:#a6a6a6;">Изменить</div><svg style="left:353px;top:499px;opacity:0.35;filter:grayscale(1);" width="19" height="19" viewBox="0 0 19 19">
<rect x="0.5" y="0.5" width="15" height="14" rx="1.2" fill="#fafafa" stroke="#a8b4b4"/>
<path d="M0.5 2 V14.5 H15.5 V2" stroke="#858585" fill="none"/>
<rect x="2" y="2" width="12" height="11" fill="#52c0f0"/>
<rect x="5" y="5" width="9" height="8" fill="#eef4f8"/>
<path d="M5 6.5 H14 M5 8.5 H14 M5 10.5 H14 M8 5 V13 M11 5 V13" stroke="#c4d4e4" stroke-width="1"/>
<path d="M3 3.5 H4 M6 3.5 H7.5 M9 3.5 H10.5 M12 3.5 H13 M3 6.5 H4 M3 8.5 H4 M3 10.5 H4 M3 12 H4" stroke="#a8e0f8" stroke-width="1"/>
<rect x="9.6" y="11" width="6.8" height="3.6" rx="1.4" fill="#eeb050" stroke="#8b1a1a" stroke-width="1.1"/>
</svg><div class="t" style="left:373px;top:501px;color:#a6a6a6;">Удалить</div><svg style="left:434px;top:499px" width="12" height="17" viewBox="0 0 12 17"><path d="M5 0.5 H11 L7 6.5 H10.5 L1.5 16 L4 8.5 H1 Z" fill="#dcdcdc"/></svg><div class="t" style="left:452px;top:501px;color:#a6a6a6;">Действия ...</div><svg style="left:527px;top:505px" width="7" height="4" viewBox="0 0 7 4"><path d="M0 0 H7 L3.5 4 Z" fill="#6d6d6d"/></svg><div style="left:187px;top:522px;width:473px;height:291px;background:#fff;border:1px solid #a0a0a0;box-sizing:border-box"></div><div style="left:188px;top:523px;width:426px;height:33px;background:#f0f0f0"></div><div style="left:188px;top:523px;width:426px;height:1px;background:#ffffff"></div><div style="left:188px;top:554px;width:426px;height:1px;background:#ffffff"></div><div style="left:189px;top:555px;width:426px;height:1px;background:#808080"></div><div style="left:205px;top:524px;width:1px;height:31px;background:#808080"></div><div style="left:206px;top:524px;width:1px;height:30px;background:#ffffff"></div><div style="left:282px;top:524px;width:1px;height:31px;background:#808080"></div><div style="left:283px;top:524px;width:1px;height:30px;background:#ffffff"></div><div class="t" style="left:206px;top:534px;width:76px;text-align:center;line-height:13px;overflow:hidden">Дата начала</div><div style="left:359px;top:524px;width:1px;height:31px;background:#808080"></div><div style="left:360px;top:524px;width:1px;height:30px;background:#ffffff"></div><div class="t" style="left:283px;top:528px;width:76px;text-align:center;line-height:13px;overflow:hidden">Дата<br>окончания</div><div style="left:424px;top:524px;width:1px;height:31px;background:#808080"></div><div style="left:425px;top:524px;width:1px;height:30px;background:#ffffff"></div><div class="t" style="left:360px;top:534px;width:64px;text-align:center;line-height:13px;overflow:hidden">Отключить</div><div style="left:489px;top:524px;width:1px;height:31px;background:#808080"></div><div style="left:490px;top:524px;width:1px;height:30px;background:#ffffff"></div><div class="t" style="left:425px;top:534px;width:64px;text-align:center;line-height:13px;overflow:hidden">OID</div><div style="left:614px;top:524px;width:1px;height:31px;background:#808080"></div><div style="left:615px;top:524px;width:1px;height:30px;background:#ffffff"></div><div class="t" style="left:490px;top:534px;width:112px;text-align:center">Маска ЛС</div><div style="left:206px;top:556px;width:409px;height:15px;background:#f0f0f0"></div><div style="left:188px;top:556px;width:17px;height:15px;background:#ffffff"></div><div style="left:189px;top:557px;width:16px;height:14px;background:#f0f0f0"></div><div style="left:189px;top:571px;width:17px;height:1px;background:#808080"></div><div style="left:206px;top:571px;width:409px;height:1px;background:#bebebe"></div><div style="left:205px;top:556px;width:1px;height:16px;background:#808080"></div><div style="left:282px;top:556px;width:1px;height:16px;background:#bebebe"></div><div style="left:359px;top:556px;width:1px;height:16px;background:#bebebe"></div><div style="left:424px;top:556px;width:1px;height:16px;background:#bebebe"></div><div style="left:489px;top:556px;width:1px;height:16px;background:#bebebe"></div><div style="left:614px;top:556px;width:1px;height:16px;background:#bebebe"></div><div class="t" style="left:208px;top:558px;width:60px;overflow:hidden">01.01.2008</div><div style="left:270px;top:557px;width:11px;height:13px;background:#f0f0f0"></div><svg style="left:273px;top:563px" width="5" height="3" viewBox="0 0 5 3"><path d="M0 0 H5 L2.5 3 Z" fill="#000"/></svg><div style="left:347px;top:557px;width:11px;height:13px;background:#f0f0f0"></div><svg style="left:350px;top:563px" width="5" height="3" viewBox="0 0 5 3"><path d="M0 0 H5 L2.5 3 Z" fill="#000"/></svg><div class="t" style="left:360px;top:558px;width:61px;text-align:right">Нет</div><div class="t" style="left:425px;top:558px;width:61px;text-align:right">1003409</div><div class="t" style="left:492px;top:558px;width:121px;overflow:hidden">20315%</div><div style="left:206px;top:572px;width:409px;height:15px;background:#fff"></div><div style="left:188px;top:572px;width:17px;height:15px;background:#ffffff"></div><div style="left:189px;top:573px;width:16px;height:14px;background:#f0f0f0"></div><div style="left:189px;top:587px;width:17px;height:1px;background:#808080"></div><div style="left:206px;top:587px;width:409px;height:1px;background:#bebebe"></div><div style="left:205px;top:572px;width:1px;height:16px;background:#808080"></div><div style="left:282px;top:572px;width:1px;height:16px;background:#bebebe"></div><div style="left:359px;top:572px;width:1px;height:16px;background:#bebebe"></div><div style="left:424px;top:572px;width:1px;height:16px;background:#bebebe"></div><div style="left:489px;top:572px;width:1px;height:16px;background:#bebebe"></div><div style="left:614px;top:572px;width:1px;height:16px;background:#bebebe"></div><div class="t" style="left:208px;top:574px;width:60px;overflow:hidden">01.01.2008</div><div style="left:270px;top:573px;width:11px;height:13px;background:#f0f0f0"></div><svg style="left:273px;top:579px" width="5" height="3" viewBox="0 0 5 3"><path d="M0 0 H5 L2.5 3 Z" fill="#000"/></svg><div style="left:347px;top:573px;width:11px;height:13px;background:#f0f0f0"></div><svg style="left:350px;top:579px" width="5" height="3" viewBox="0 0 5 3"><path d="M0 0 H5 L2.5 3 Z" fill="#000"/></svg><div class="t" style="left:360px;top:574px;width:61px;text-align:right">Нет</div><div class="t" style="left:425px;top:574px;width:61px;text-align:right">1003410</div><div class="t" style="left:492px;top:574px;width:121px;overflow:hidden">20316%</div><div style="left:206px;top:588px;width:409px;height:15px;background:#f0f0f0"></div><div style="left:188px;top:588px;width:17px;height:15px;background:#ffffff"></div><div style="left:189px;top:589px;width:16px;height:14px;background:#f0f0f0"></div><div style="left:189px;top:603px;width:17px;height:1px;background:#808080"></div><div style="left:206px;top:603px;width:409px;height:1px;background:#bebebe"></div><div style="left:205px;top:588px;width:1px;height:16px;background:#808080"></div><div style="left:282px;top:588px;width:1px;height:16px;background:#bebebe"></div><div style="left:359px;top:588px;width:1px;height:16px;background:#bebebe"></div><div style="left:424px;top:588px;width:1px;height:16px;background:#bebebe"></div><div style="left:489px;top:588px;width:1px;height:16px;background:#bebebe"></div><div style="left:614px;top:588px;width:1px;height:16px;background:#bebebe"></div><div class="t" style="left:208px;top:590px;width:60px;overflow:hidden">01.01.2008</div><div style="left:270px;top:589px;width:11px;height:13px;background:#f0f0f0"></div><svg style="left:273px;top:595px" width="5" height="3" viewBox="0 0 5 3"><path d="M0 0 H5 L2.5 3 Z" fill="#000"/></svg><div style="left:347px;top:589px;width:11px;height:13px;background:#f0f0f0"></div><svg style="left:350px;top:595px" width="5" height="3" viewBox="0 0 5 3"><path d="M0 0 H5 L2.5 3 Z" fill="#000"/></svg><div class="t" style="left:360px;top:590px;width:61px;text-align:right">Нет</div><div class="t" style="left:425px;top:590px;width:61px;text-align:right">1003411</div><div class="t" style="left:492px;top:590px;width:121px;overflow:hidden">20317%</div><div style="left:206px;top:604px;width:409px;height:15px;background:#fff"></div><div style="left:188px;top:604px;width:17px;height:15px;background:#ffffff"></div><div style="left:189px;top:605px;width:16px;height:14px;background:#f0f0f0"></div><div style="left:189px;top:619px;width:17px;height:1px;background:#808080"></div><div style="left:206px;top:619px;width:409px;height:1px;background:#bebebe"></div><div style="left:205px;top:604px;width:1px;height:16px;background:#808080"></div><div style="left:282px;top:604px;width:1px;height:16px;background:#bebebe"></div><div style="left:359px;top:604px;width:1px;height:16px;background:#bebebe"></div><div style="left:424px;top:604px;width:1px;height:16px;background:#bebebe"></div><div style="left:489px;top:604px;width:1px;height:16px;background:#bebebe"></div><div style="left:614px;top:604px;width:1px;height:16px;background:#bebebe"></div><div class="t" style="left:208px;top:606px;width:60px;overflow:hidden">01.01.2008</div><div style="left:270px;top:605px;width:11px;height:13px;background:#f0f0f0"></div><svg style="left:273px;top:611px" width="5" height="3" viewBox="0 0 5 3"><path d="M0 0 H5 L2.5 3 Z" fill="#000"/></svg><div style="left:347px;top:605px;width:11px;height:13px;background:#f0f0f0"></div><svg style="left:350px;top:611px" width="5" height="3" viewBox="0 0 5 3"><path d="M0 0 H5 L2.5 3 Z" fill="#000"/></svg><div class="t" style="left:360px;top:606px;width:61px;text-align:right">Нет</div><div class="t" style="left:425px;top:606px;width:61px;text-align:right">1003412</div><div class="t" style="left:492px;top:606px;width:121px;overflow:hidden">20318%</div><div style="left:206px;top:620px;width:409px;height:15px;background:#bfcfe0"></div><div style="left:188px;top:620px;width:17px;height:15px;background:#ffffff"></div><div style="left:189px;top:621px;width:16px;height:14px;background:#f0f0f0"></div><div style="left:189px;top:635px;width:17px;height:1px;background:#808080"></div><div style="left:206px;top:635px;width:409px;height:1px;background:#bebebe"></div><div style="left:205px;top:620px;width:1px;height:16px;background:#808080"></div><div style="left:282px;top:620px;width:1px;height:16px;background:#bebebe"></div><div style="left:359px;top:620px;width:1px;height:16px;background:#bebebe"></div><div style="left:424px;top:620px;width:1px;height:16px;background:#bebebe"></div><div style="left:489px;top:620px;width:1px;height:16px;background:#bebebe"></div><div style="left:614px;top:620px;width:1px;height:16px;background:#bebebe"></div><svg style="left:197px;top:622px" width="6" height="11" viewBox="0 0 6 11"><path d="M0 0 L6 5.5 L0 11 Z" fill="#000"/></svg><div class="t" style="left:208px;top:622px;width:60px;overflow:hidden">01.01.2008</div><div style="left:270px;top:621px;width:11px;height:13px;background:#f0f0f0"></div><svg style="left:273px;top:627px" width="5" height="3" viewBox="0 0 5 3"><path d="M0 0 H5 L2.5 3 Z" fill="#000"/></svg><div style="left:347px;top:621px;width:11px;height:13px;background:#f0f0f0"></div><svg style="left:350px;top:627px" width="5" height="3" viewBox="0 0 5 3"><path d="M0 0 H5 L2.5 3 Z" fill="#000"/></svg><div class="t" style="left:360px;top:622px;width:61px;text-align:right">Нет</div><div class="t" style="left:425px;top:622px;width:61px;text-align:right">1003413</div><div class="t" style="left:492px;top:622px;width:121px;overflow:hidden">3200%</div><div style="left:206px;top:636px;width:409px;height:15px;background:#fff"></div><div style="left:188px;top:636px;width:17px;height:15px;background:#ffffff"></div><div style="left:189px;top:637px;width:16px;height:14px;background:#f0f0f0"></div><div style="left:189px;top:651px;width:17px;height:1px;background:#808080"></div><div style="left:206px;top:651px;width:409px;height:1px;background:#bebebe"></div><div style="left:205px;top:636px;width:1px;height:16px;background:#808080"></div><div style="left:282px;top:636px;width:1px;height:16px;background:#bebebe"></div><div style="left:359px;top:636px;width:1px;height:16px;background:#bebebe"></div><div style="left:424px;top:636px;width:1px;height:16px;background:#bebebe"></div><div style="left:489px;top:636px;width:1px;height:16px;background:#bebebe"></div><div style="left:614px;top:636px;width:1px;height:16px;background:#bebebe"></div><div class="t" style="left:208px;top:638px;width:60px;overflow:hidden">01.01.2008</div><div style="left:270px;top:637px;width:11px;height:13px;background:#f0f0f0"></div><svg style="left:273px;top:643px" width="5" height="3" viewBox="0 0 5 3"><path d="M0 0 H5 L2.5 3 Z" fill="#000"/></svg><div style="left:347px;top:637px;width:11px;height:13px;background:#f0f0f0"></div><svg style="left:350px;top:643px" width="5" height="3" viewBox="0 0 5 3"><path d="M0 0 H5 L2.5 3 Z" fill="#000"/></svg><div class="t" style="left:360px;top:638px;width:61px;text-align:right">Нет</div><div class="t" style="left:425px;top:638px;width:61px;text-align:right">1003414</div><div class="t" style="left:492px;top:638px;width:121px;overflow:hidden">32010%</div><div style="left:206px;top:652px;width:409px;height:15px;background:#f0f0f0"></div><div style="left:188px;top:652px;width:17px;height:15px;background:#ffffff"></div><div style="left:189px;top:653px;width:16px;height:14px;background:#f0f0f0"></div><div style="left:189px;top:667px;width:17px;height:1px;background:#808080"></div><div style="left:206px;top:667px;width:409px;height:1px;background:#bebebe"></div><div style="left:205px;top:652px;width:1px;height:16px;background:#808080"></div><div style="left:282px;top:652px;width:1px;height:16px;background:#bebebe"></div><div style="left:359px;top:652px;width:1px;height:16px;background:#bebebe"></div><div style="left:424px;top:652px;width:1px;height:16px;background:#bebebe"></div><div style="left:489px;top:652px;width:1px;height:16px;background:#bebebe"></div><div style="left:614px;top:652px;width:1px;height:16px;background:#bebebe"></div><div class="t" style="left:208px;top:654px;width:60px;overflow:hidden">01.01.2008</div><div style="left:270px;top:653px;width:11px;height:13px;background:#f0f0f0"></div><svg style="left:273px;top:659px" width="5" height="3" viewBox="0 0 5 3"><path d="M0 0 H5 L2.5 3 Z" fill="#000"/></svg><div style="left:347px;top:653px;width:11px;height:13px;background:#f0f0f0"></div><svg style="left:350px;top:659px" width="5" height="3" viewBox="0 0 5 3"><path d="M0 0 H5 L2.5 3 Z" fill="#000"/></svg><div class="t" style="left:360px;top:654px;width:61px;text-align:right">Нет</div><div class="t" style="left:425px;top:654px;width:61px;text-align:right">1003415</div><div class="t" style="left:492px;top:654px;width:121px;overflow:hidden">3210%</div><div style="left:206px;top:668px;width:409px;height:15px;background:#fff"></div><div style="left:188px;top:668px;width:17px;height:15px;background:#ffffff"></div><div style="left:189px;top:669px;width:16px;height:14px;background:#f0f0f0"></div><div style="left:189px;top:683px;width:17px;height:1px;background:#808080"></div><div style="left:206px;top:683px;width:409px;height:1px;background:#bebebe"></div><div style="left:205px;top:668px;width:1px;height:16px;background:#808080"></div><div style="left:282px;top:668px;width:1px;height:16px;background:#bebebe"></div><div style="left:359px;top:668px;width:1px;height:16px;background:#bebebe"></div><div style="left:424px;top:668px;width:1px;height:16px;background:#bebebe"></div><div style="left:489px;top:668px;width:1px;height:16px;background:#bebebe"></div><div style="left:614px;top:668px;width:1px;height:16px;background:#bebebe"></div><div class="t" style="left:208px;top:670px;width:60px;overflow:hidden">01.01.2008</div><div style="left:270px;top:669px;width:11px;height:13px;background:#f0f0f0"></div><svg style="left:273px;top:675px" width="5" height="3" viewBox="0 0 5 3"><path d="M0 0 H5 L2.5 3 Z" fill="#000"/></svg><div style="left:347px;top:669px;width:11px;height:13px;background:#f0f0f0"></div><svg style="left:350px;top:675px" width="5" height="3" viewBox="0 0 5 3"><path d="M0 0 H5 L2.5 3 Z" fill="#000"/></svg><div class="t" style="left:360px;top:670px;width:61px;text-align:right">Нет</div><div class="t" style="left:425px;top:670px;width:61px;text-align:right">1003416</div><div class="t" style="left:492px;top:670px;width:121px;overflow:hidden">32110%</div><div style="left:206px;top:684px;width:409px;height:15px;background:#f0f0f0"></div><div style="left:188px;top:684px;width:17px;height:15px;background:#ffffff"></div><div style="left:189px;top:685px;width:16px;height:14px;background:#f0f0f0"></div><div style="left:189px;top:699px;width:17px;height:1px;background:#808080"></div><div style="left:206px;top:699px;width:409px;height:1px;background:#bebebe"></div><div style="left:205px;top:684px;width:1px;height:16px;background:#808080"></div><div style="left:282px;top:684px;width:1px;height:16px;background:#bebebe"></div><div style="left:359px;top:684px;width:1px;height:16px;background:#bebebe"></div><div style="left:424px;top:684px;width:1px;height:16px;background:#bebebe"></div><div style="left:489px;top:684px;width:1px;height:16px;background:#bebebe"></div><div style="left:614px;top:684px;width:1px;height:16px;background:#bebebe"></div><div class="t" style="left:208px;top:686px;width:60px;overflow:hidden">01.01.2008</div><div style="left:270px;top:685px;width:11px;height:13px;background:#f0f0f0"></div><svg style="left:273px;top:691px" width="5" height="3" viewBox="0 0 5 3"><path d="M0 0 H5 L2.5 3 Z" fill="#000"/></svg><div style="left:347px;top:685px;width:11px;height:13px;background:#f0f0f0"></div><svg style="left:350px;top:691px" width="5" height="3" viewBox="0 0 5 3"><path d="M0 0 H5 L2.5 3 Z" fill="#000"/></svg><div class="t" style="left:360px;top:686px;width:61px;text-align:right">Нет</div><div class="t" style="left:425px;top:686px;width:61px;text-align:right">1003417</div><div class="t" style="left:492px;top:686px;width:121px;overflow:hidden">3220%</div><div style="left:206px;top:700px;width:409px;height:15px;background:#fff"></div><div style="left:188px;top:700px;width:17px;height:15px;background:#ffffff"></div><div style="left:189px;top:701px;width:16px;height:14px;background:#f0f0f0"></div><div style="left:189px;top:715px;width:17px;height:1px;background:#808080"></div><div style="left:206px;top:715px;width:409px;height:1px;background:#bebebe"></div><div style="left:205px;top:700px;width:1px;height:16px;background:#808080"></div><div style="left:282px;top:700px;width:1px;height:16px;background:#bebebe"></div><div style="left:359px;top:700px;width:1px;height:16px;background:#bebebe"></div><div style="left:424px;top:700px;width:1px;height:16px;background:#bebebe"></div><div style="left:489px;top:700px;width:1px;height:16px;background:#bebebe"></div><div style="left:614px;top:700px;width:1px;height:16px;background:#bebebe"></div><div class="t" style="left:208px;top:702px;width:60px;overflow:hidden">01.01.2008</div><div style="left:270px;top:701px;width:11px;height:13px;background:#f0f0f0"></div><svg style="left:273px;top:707px" width="5" height="3" viewBox="0 0 5 3"><path d="M0 0 H5 L2.5 3 Z" fill="#000"/></svg><div style="left:347px;top:701px;width:11px;height:13px;background:#f0f0f0"></div><svg style="left:350px;top:707px" width="5" height="3" viewBox="0 0 5 3"><path d="M0 0 H5 L2.5 3 Z" fill="#000"/></svg><div class="t" style="left:360px;top:702px;width:61px;text-align:right">Нет</div><div class="t" style="left:425px;top:702px;width:61px;text-align:right">1003418</div><div class="t" style="left:492px;top:702px;width:121px;overflow:hidden">3230%</div><div style="left:206px;top:716px;width:409px;height:15px;background:#f0f0f0"></div><div style="left:188px;top:716px;width:17px;height:15px;background:#ffffff"></div><div style="left:189px;top:717px;width:16px;height:14px;background:#f0f0f0"></div><div style="left:189px;top:731px;width:17px;height:1px;background:#808080"></div><div style="left:206px;top:731px;width:409px;height:1px;background:#bebebe"></div><div style="left:205px;top:716px;width:1px;height:16px;background:#808080"></div><div style="left:282px;top:716px;width:1px;height:16px;background:#bebebe"></div><div style="left:359px;top:716px;width:1px;height:16px;background:#bebebe"></div><div style="left:424px;top:716px;width:1px;height:16px;background:#bebebe"></div><div style="left:489px;top:716px;width:1px;height:16px;background:#bebebe"></div><div style="left:614px;top:716px;width:1px;height:16px;background:#bebebe"></div><div class="t" style="left:208px;top:718px;width:60px;overflow:hidden">01.01.2008</div><div style="left:270px;top:717px;width:11px;height:13px;background:#f0f0f0"></div><svg style="left:273px;top:723px" width="5" height="3" viewBox="0 0 5 3"><path d="M0 0 H5 L2.5 3 Z" fill="#000"/></svg><div style="left:347px;top:717px;width:11px;height:13px;background:#f0f0f0"></div><svg style="left:350px;top:723px" width="5" height="3" viewBox="0 0 5 3"><path d="M0 0 H5 L2.5 3 Z" fill="#000"/></svg><div class="t" style="left:360px;top:718px;width:61px;text-align:right">Нет</div><div class="t" style="left:425px;top:718px;width:61px;text-align:right">1003419</div><div class="t" style="left:492px;top:718px;width:121px;overflow:hidden">32401%</div><div style="left:206px;top:732px;width:409px;height:15px;background:#fff"></div><div style="left:188px;top:732px;width:17px;height:15px;background:#ffffff"></div><div style="left:189px;top:733px;width:16px;height:14px;background:#f0f0f0"></div><div style="left:189px;top:747px;width:17px;height:1px;background:#808080"></div><div style="left:206px;top:747px;width:409px;height:1px;background:#bebebe"></div><div style="left:205px;top:732px;width:1px;height:16px;background:#808080"></div><div style="left:282px;top:732px;width:1px;height:16px;background:#bebebe"></div><div style="left:359px;top:732px;width:1px;height:16px;background:#bebebe"></div><div style="left:424px;top:732px;width:1px;height:16px;background:#bebebe"></div><div style="left:489px;top:732px;width:1px;height:16px;background:#bebebe"></div><div style="left:614px;top:732px;width:1px;height:16px;background:#bebebe"></div><div class="t" style="left:208px;top:734px;width:60px;overflow:hidden">01.01.2008</div><div style="left:270px;top:733px;width:11px;height:13px;background:#f0f0f0"></div><svg style="left:273px;top:739px" width="5" height="3" viewBox="0 0 5 3"><path d="M0 0 H5 L2.5 3 Z" fill="#000"/></svg><div style="left:347px;top:733px;width:11px;height:13px;background:#f0f0f0"></div><svg style="left:350px;top:739px" width="5" height="3" viewBox="0 0 5 3"><path d="M0 0 H5 L2.5 3 Z" fill="#000"/></svg><div class="t" style="left:360px;top:734px;width:61px;text-align:right">Нет</div><div class="t" style="left:425px;top:734px;width:61px;text-align:right">1003420</div><div class="t" style="left:492px;top:734px;width:121px;overflow:hidden">32402%</div><div style="left:642px;top:524px;width:16px;height:287px;background:#f0f0f0"></div><div style="left:642px;top:585px;width:16px;height:132px;background:#c8c8c8"></div><svg style="left:646px;top:530px" width="8" height="7" viewBox="0 0 8 7"><path d="M0 3.8 L4 0 L8 3.8 L8 6.5 L4 2.7 L0 6.5 Z" fill="#505050"/></svg><svg style="left:646px;top:800px" width="8" height="7" viewBox="0 0 8 7"><path d="M0 0.5 L4 4.3 L8 0.5 L8 3.2 L4 7 L0 3.2 Z" fill="#505050"/></svg><svg style="left:601px;top:534px" width="10" height="9" viewBox="0 0 10 9"><path d="M4.6 1 L8.6 7" stroke="#ffffff" stroke-width="1.2"/><path d="M1 7.6 H9" stroke="#ffffff" stroke-width="1.2"/><path d="M1.3 6.6 L4.6 1.2" stroke="#6a6a6a" stroke-width="1.1" stroke-dasharray="1.1 0.7"/></svg><div style="left:660px;top:477px;width:24px;height:336px;background:#f0f0f0"></div><div style="left:684px;top:477px;width:584px;height:15px;background:#808080"></div><div class="t" style="left:684px;top:478px;line-height:15px;font-weight:bold;font-size:12px;letter-spacing:0px;color:#fff">Критерии</div><svg style="left:687px;top:499px;opacity:0.35;filter:grayscale(1);" width="19" height="19" viewBox="0 0 19 19">
<rect x="0.5" y="0.5" width="15" height="14" rx="1.2" fill="#fafafa" stroke="#a8b4b4"/>
<path d="M0.5 2 V14.5 H15.5 V2" stroke="#858585" fill="none"/>
<rect x="2" y="2" width="12" height="11" fill="#52c0f0"/>
<rect x="5" y="5" width="9" height="8" fill="#eef4f8"/>
<path d="M5 6.5 H14 M5 8.5 H14 M5 10.5 H14 M8 5 V13 M11 5 V13" stroke="#c4d4e4" stroke-width="1"/>
<path d="M3 3.5 H4 M6 3.5 H7.5 M9 3.5 H10.5 M12 3.5 H13 M3 6.5 H4 M3 8.5 H4 M3 10.5 H4 M3 12 H4" stroke="#a8e0f8" stroke-width="1"/>
<path d="M11.2 9.4 H13.8 V11.6 H16 V14.2 H13.8 V16.4 H11.2 V14.2 H9 V11.6 H11.2 Z" fill="#2ac436" stroke="#0b7a16" stroke-width="0.9"/>
</svg><div class="t" style="left:707px;top:501px;color:#a6a6a6;">Добавить</div><svg style="left:768px;top:499px;opacity:0.35;filter:grayscale(1);" width="19" height="19" viewBox="0 0 19 19">
<rect x="0.5" y="0.5" width="15" height="14" rx="1.2" fill="#fafafa" stroke="#a8b4b4"/>
<path d="M0.5 2 V14.5 H15.5 V2" stroke="#858585" fill="none"/>
<rect x="2" y="2" width="12" height="11" fill="#52c0f0"/>
<rect x="5" y="5" width="9" height="8" fill="#eef4f8"/>
<path d="M5 6.5 H14 M5 8.5 H14 M5 10.5 H14 M8 5 V13 M11 5 V13" stroke="#c4d4e4" stroke-width="1"/>
<path d="M3 3.5 H4 M6 3.5 H7.5 M9 3.5 H10.5 M12 3.5 H13 M3 6.5 H4 M3 8.5 H4 M3 10.5 H4 M3 12 H4" stroke="#a8e0f8" stroke-width="1"/>
<path d="M9.6 16.4 L8 17.6 L8.8 15.4 L16 8.2 L17.6 9.6 Z" fill="#d8b850" stroke="#6a6a2a" stroke-width="0.7"/><path d="M8 17.6 L8.8 15.4 L9.8 16.6 Z" fill="#000"/><path d="M15.6 7.6 L17.2 6.4 L18.4 7.6 L17.6 9.4 Z" fill="#e08020"/><circle cx="18" cy="7.4" r="0.9" fill="#d02020"/>
</svg><div class="t" style="left:788px;top:501px;color:#a6a6a6;">Изменить</div><svg style="left:850px;top:499px;opacity:0.35;filter:grayscale(1);" width="19" height="19" viewBox="0 0 19 19">
<rect x="0.5" y="0.5" width="15" height="14" rx="1.2" fill="#fafafa" stroke="#a8b4b4"/>
<path d="M0.5 2 V14.5 H15.5 V2" stroke="#858585" fill="none"/>
<rect x="2" y="2" width="12" height="11" fill="#52c0f0"/>
<rect x="5" y="5" width="9" height="8" fill="#eef4f8"/>
<path d="M5 6.5 H14 M5 8.5 H14 M5 10.5 H14 M8 5 V13 M11 5 V13" stroke="#c4d4e4" stroke-width="1"/>
<path d="M3 3.5 H4 M6 3.5 H7.5 M9 3.5 H10.5 M12 3.5 H13 M3 6.5 H4 M3 8.5 H4 M3 10.5 H4 M3 12 H4" stroke="#a8e0f8" stroke-width="1"/>
<rect x="9.6" y="11" width="6.8" height="3.6" rx="1.4" fill="#eeb050" stroke="#8b1a1a" stroke-width="1.1"/>
</svg><div class="t" style="left:870px;top:501px;color:#a6a6a6;">Удалить</div><svg style="left:931px;top:499px" width="12" height="17" viewBox="0 0 12 17"><path d="M5 0.5 H11 L7 6.5 H10.5 L1.5 16 L4 8.5 H1 Z" fill="#dcdcdc"/></svg><div class="t" style="left:949px;top:501px;color:#a6a6a6;">Действия ...</div><svg style="left:1024px;top:505px" width="7" height="4" viewBox="0 0 7 4"><path d="M0 0 H7 L3.5 4 Z" fill="#6d6d6d"/></svg><div style="left:684px;top:522px;width:584px;height:291px;background:#fff;border-left:1px solid #a0a0a0;border-top:1px solid #a0a0a0;border-bottom:1px solid #a0a0a0;box-sizing:border-box"></div><div style="left:685px;top:523px;width:569px;height:33px;background:#f0f0f0"></div><div style="left:685px;top:523px;width:569px;height:1px;background:#ffffff"></div><div style="left:685px;top:554px;width:569px;height:1px;background:#ffffff"></div><div style="left:686px;top:555px;width:568px;height:1px;background:#808080"></div><div style="left:702px;top:524px;width:1px;height:31px;background:#808080"></div><div style="left:703px;top:524px;width:1px;height:30px;background:#ffffff"></div><div style="left:779px;top:524px;width:1px;height:31px;background:#808080"></div><div style="left:780px;top:524px;width:1px;height:30px;background:#ffffff"></div><div class="t" style="left:703px;top:534px;width:76px;text-align:center;line-height:13px;overflow:hidden">Дата Начала</div><div style="left:825px;top:524px;width:1px;height:31px;background:#808080"></div><div style="left:826px;top:524px;width:1px;height:30px;background:#ffffff"></div><div class="t" style="left:780px;top:528px;width:45px;text-align:center;line-height:13px;overflow:hidden">Дата<br>кончани</div><div style="left:890px;top:524px;width:1px;height:31px;background:#808080"></div><div style="left:891px;top:524px;width:1px;height:30px;background:#ffffff"></div><div class="t" style="left:826px;top:534px;width:64px;text-align:center;line-height:13px;overflow:hidden">Отключить</div><div style="left:973px;top:524px;width:1px;height:31px;background:#808080"></div><div style="left:974px;top:524px;width:1px;height:30px;background:#ffffff"></div><div class="t" style="left:891px;top:534px;width:82px;text-align:center;line-height:13px;overflow:hidden">Операция</div><div style="left:1033px;top:524px;width:1px;height:31px;background:#808080"></div><div style="left:1034px;top:524px;width:1px;height:30px;background:#ffffff"></div><div class="t" style="left:974px;top:534px;width:59px;text-align:center;line-height:13px;overflow:hidden">Параметр</div><div style="left:1237px;top:524px;width:1px;height:31px;background:#808080"></div><div style="left:1238px;top:524px;width:1px;height:30px;background:#ffffff"></div><div class="t" style="left:1034px;top:534px;width:203px;text-align:center;line-height:13px;overflow:hidden">Критерий</div><div style="left:1253px;top:524px;width:1px;height:31px;background:#808080"></div><div style="left:1254px;top:524px;width:1px;height:30px;background:#ffffff"></div><div style="left:703px;top:556px;width:551px;height:15px;background:#bfcfe0"></div><div style="left:685px;top:556px;width:17px;height:15px;background:#ffffff"></div><div style="left:686px;top:557px;width:16px;height:14px;background:#f0f0f0"></div><div style="left:686px;top:571px;width:17px;height:1px;background:#808080"></div><div style="left:703px;top:571px;width:551px;height:1px;background:#bebebe"></div><div style="left:702px;top:556px;width:1px;height:16px;background:#808080"></div><div style="left:779px;top:556px;width:1px;height:16px;background:#bebebe"></div><div style="left:825px;top:556px;width:1px;height:16px;background:#bebebe"></div><div style="left:890px;top:556px;width:1px;height:16px;background:#bebebe"></div><div style="left:973px;top:556px;width:1px;height:16px;background:#bebebe"></div><div style="left:1033px;top:556px;width:1px;height:16px;background:#bebebe"></div><div style="left:1237px;top:556px;width:1px;height:16px;background:#bebebe"></div><div style="left:1253px;top:556px;width:1px;height:16px;background:#bebebe"></div><svg style="left:694px;top:558px" width="6" height="11" viewBox="0 0 6 11"><path d="M0 0 L6 5.5 L0 11 Z" fill="#000"/></svg><div class="t" style="left:705px;top:558px;width:60px;overflow:hidden">01.01.2008</div><div style="left:767px;top:557px;width:11px;height:13px;background:#f0f0f0"></div><svg style="left:770px;top:563px" width="5" height="3" viewBox="0 0 5 3"><path d="M0 0 H5 L2.5 3 Z" fill="#000"/></svg><div style="left:813px;top:557px;width:11px;height:13px;background:#f0f0f0"></div><svg style="left:816px;top:563px" width="5" height="3" viewBox="0 0 5 3"><path d="M0 0 H5 L2.5 3 Z" fill="#000"/></svg><div class="t" style="left:826px;top:558px;width:61px;text-align:right">Нет</div><div class="t" style="left:893px;top:558px;width:79px;overflow:hidden">Добавить</div><div class="t" style="left:976px;top:558px;width:56px;overflow:hidden">1</div><div class="t" style="left:1036px;top:558px;width:200px;overflow:hidden">Вид Контрагента</div><div style="left:703px;top:572px;width:551px;height:15px;background:#fff"></div><div style="left:685px;top:572px;width:17px;height:15px;background:#ffffff"></div><div style="left:686px;top:573px;width:16px;height:14px;background:#f0f0f0"></div><div style="left:686px;top:587px;width:17px;height:1px;background:#808080"></div><div style="left:703px;top:587px;width:551px;height:1px;background:#bebebe"></div><div style="left:702px;top:572px;width:1px;height:16px;background:#808080"></div><div style="left:779px;top:572px;width:1px;height:16px;background:#bebebe"></div><div style="left:825px;top:572px;width:1px;height:16px;background:#bebebe"></div><div style="left:890px;top:572px;width:1px;height:16px;background:#bebebe"></div><div style="left:973px;top:572px;width:1px;height:16px;background:#bebebe"></div><div style="left:1033px;top:572px;width:1px;height:16px;background:#bebebe"></div><div style="left:1237px;top:572px;width:1px;height:16px;background:#bebebe"></div><div style="left:1253px;top:572px;width:1px;height:16px;background:#bebebe"></div><div class="t" style="left:705px;top:574px;width:60px;overflow:hidden">01.01.2008</div><div style="left:767px;top:573px;width:11px;height:13px;background:#f0f0f0"></div><svg style="left:770px;top:579px" width="5" height="3" viewBox="0 0 5 3"><path d="M0 0 H5 L2.5 3 Z" fill="#000"/></svg><div style="left:813px;top:573px;width:11px;height:13px;background:#f0f0f0"></div><svg style="left:816px;top:579px" width="5" height="3" viewBox="0 0 5 3"><path d="M0 0 H5 L2.5 3 Z" fill="#000"/></svg><div class="t" style="left:826px;top:574px;width:61px;text-align:right">Нет</div><div class="t" style="left:893px;top:574px;width:79px;overflow:hidden">Добавить</div><div class="t" style="left:976px;top:574px;width:56px;overflow:hidden">0</div><div class="t" style="left:1036px;top:574px;width:200px;overflow:hidden">Принадлежность портфелю</div><div style="left:703px;top:588px;width:551px;height:15px;background:#f0f0f0"></div><div style="left:685px;top:588px;width:17px;height:15px;background:#ffffff"></div><div style="left:686px;top:589px;width:16px;height:14px;background:#f0f0f0"></div><div style="left:686px;top:603px;width:17px;height:1px;background:#808080"></div><div style="left:703px;top:603px;width:551px;height:1px;background:#bebebe"></div><div style="left:702px;top:588px;width:1px;height:16px;background:#808080"></div><div style="left:779px;top:588px;width:1px;height:16px;background:#bebebe"></div><div style="left:825px;top:588px;width:1px;height:16px;background:#bebebe"></div><div style="left:890px;top:588px;width:1px;height:16px;background:#bebebe"></div><div style="left:973px;top:588px;width:1px;height:16px;background:#bebebe"></div><div style="left:1033px;top:588px;width:1px;height:16px;background:#bebebe"></div><div style="left:1237px;top:588px;width:1px;height:16px;background:#bebebe"></div><div style="left:1253px;top:588px;width:1px;height:16px;background:#bebebe"></div><div class="t" style="left:705px;top:590px;width:60px;overflow:hidden">01.01.2008</div><div style="left:767px;top:589px;width:11px;height:13px;background:#f0f0f0"></div><svg style="left:770px;top:595px" width="5" height="3" viewBox="0 0 5 3"><path d="M0 0 H5 L2.5 3 Z" fill="#000"/></svg><div style="left:813px;top:589px;width:11px;height:13px;background:#f0f0f0"></div><svg style="left:816px;top:595px" width="5" height="3" viewBox="0 0 5 3"><path d="M0 0 H5 L2.5 3 Z" fill="#000"/></svg><div class="t" style="left:826px;top:590px;width:61px;text-align:right">Нет</div><div class="t" style="left:893px;top:590px;width:79px;overflow:hidden">Добавить</div><div class="t" style="left:976px;top:590px;width:56px;overflow:hidden">1,2,3,4,5</div><div class="t" style="left:1036px;top:590px;width:200px;overflow:hidden">Категория качества</div><div style="left:703px;top:604px;width:551px;height:15px;background:#fff"></div><div style="left:685px;top:604px;width:17px;height:15px;background:#ffffff"></div><div style="left:686px;top:605px;width:16px;height:14px;background:#f0f0f0"></div><div style="left:686px;top:619px;width:17px;height:1px;background:#808080"></div><div style="left:703px;top:619px;width:551px;height:1px;background:#bebebe"></div><div style="left:702px;top:604px;width:1px;height:16px;background:#808080"></div><div style="left:779px;top:604px;width:1px;height:16px;background:#bebebe"></div><div style="left:825px;top:604px;width:1px;height:16px;background:#bebebe"></div><div style="left:890px;top:604px;width:1px;height:16px;background:#bebebe"></div><div style="left:973px;top:604px;width:1px;height:16px;background:#bebebe"></div><div style="left:1033px;top:604px;width:1px;height:16px;background:#bebebe"></div><div style="left:1237px;top:604px;width:1px;height:16px;background:#bebebe"></div><div style="left:1253px;top:604px;width:1px;height:16px;background:#bebebe"></div><div class="t" style="left:705px;top:606px;width:60px;overflow:hidden">01.01.2008</div><div style="left:767px;top:605px;width:11px;height:13px;background:#f0f0f0"></div><svg style="left:770px;top:611px" width="5" height="3" viewBox="0 0 5 3"><path d="M0 0 H5 L2.5 3 Z" fill="#000"/></svg><div style="left:813px;top:605px;width:11px;height:13px;background:#f0f0f0"></div><svg style="left:816px;top:611px" width="5" height="3" viewBox="0 0 5 3"><path d="M0 0 H5 L2.5 3 Z" fill="#000"/></svg><div class="t" style="left:826px;top:606px;width:61px;text-align:right">Нет</div><div class="t" style="left:893px;top:606px;width:79px;overflow:hidden">Добавить</div><div class="t" style="left:976px;top:606px;width:56px;overflow:hidden">1,7</div><div class="t" style="left:1036px;top:606px;width:200px;overflow:hidden">Тип юридического лица</div><div style="left:703px;top:556px;width:76px;height:15px;background:#3399ff"></div><div class="t" style="left:706px;top:558px;color:#fff">01.01.2008</div><div style="left:767px;top:557px;width:11px;height:13px;background:#f4f1ee"></div><svg style="left:770px;top:563px" width="5" height="3" viewBox="0 0 5 3"><path d="M0 0 H5 L2.5 3 Z" fill="#000"/></svg><div style="left:1254px;top:524px;width:14px;height:271px;background:#f0f0f0"></div><div style="left:1254px;top:541px;width:14px;height:134px;background:#c8c8c8"></div><svg style="left:1258px;top:530px" width="8" height="7" viewBox="0 0 8 7"><path d="M0 3.8 L4 0 L8 3.8 L8 6.5 L4 2.7 L0 6.5 Z" fill="#505050"/></svg><svg style="left:1258px;top:782px" width="8" height="7" viewBox="0 0 8 7"><path d="M0 0.5 L4 4.3 L8 0.5 L8 3.2 L4 7 L0 3.2 Z" fill="#505050"/></svg><div style="left:686px;top:795px;width:568px;height:16px;background:#f0f0f0"></div><div style="left:703px;top:795px;width:17px;height:15px;background:#c8c8c8"></div><svg style="left:691px;top:799px" width="7" height="8" viewBox="0 0 7 8"><path d="M3.8 0 L0 4 L3.8 8 L6.5 8 L2.7 4 L6.5 0 Z" fill="#505050"/></svg><svg style="left:1241px;top:799px" width="7" height="8" viewBox="0 0 7 8"><path d="M0.5 0 L4.3 4 L0.5 8 L3.2 8 L7 4 L3.2 0 Z" fill="#505050"/></svg><div style="left:1254px;top:795px;width:14px;height:16px;background:#f0f0f0"></div>
</body></html>
